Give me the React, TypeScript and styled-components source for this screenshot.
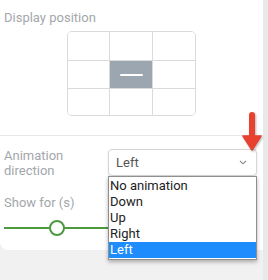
import React from 'react';
import styled, { createGlobalStyle } from 'styled-components';

const GlobalStyle = createGlobalStyle`
  html, body {
    margin: 0;
    padding: 0;
    background: #f1f1f1;
    font-family: Roboto, "Liberation Sans", sans-serif;
  }
`;

const Page = styled.div`
  display: flex;
  width: 268px;
  height: 280px;
  overflow: hidden;
`;

const Panel = styled.div`
  position: relative;
  width: 263px;
  height: 250px;
  background: #ffffff;
  border-bottom-left-radius: 8px;
  display: flex;
  flex-direction: column;
`;

const Strip = styled.div`
  flex: 1;
  background: #e9e9e9;
`;

const Section = styled.div<{ $top?: boolean }>`
  padding: ${(p) => (p.$top ? '10px 4px 0' : '13px 4px 0')};
  height: ${(p) => (p.$top ? '135px' : 'auto')};
  border-top: ${(p) => (p.$top ? 'none' : '1px solid #e7e7e7')};
  box-sizing: border-box;
`;

const Label = styled.div`
  font-size: 13px;
  line-height: 15px;
  color: #a3a7ab;
`;

const PositionGrid = styled.div`
  margin: 6px auto 0;
  width: 127px;
  display: grid;
  grid-template-columns: 42px 43px 42px;
  grid-template-rows: 29px 28px 26px;
  border: 1px solid #dadada;
  border-radius: 5px;
  overflow: hidden;
`;

const Cell = styled.div<{ $active?: boolean; $col: number; $row: number }>`
  background: ${(p) => (p.$active ? '#9ba6b1' : '#ffffff')};
  border-right: ${(p) => (p.$col < 2 ? '1px solid #dadada' : 'none')};
  border-bottom: ${(p) => (p.$row < 2 ? '1px solid #dadada' : 'none')};
  display: flex;
  align-items: center;
  justify-content: center;
`;

const Dash = styled.div`
  width: 23px;
  height: 2px;
  border-radius: 1px;
  background: #ffffff;
`;

const Row = styled.div`
  display: flex;
  align-items: flex-start;
`;

const RowLabel = styled(Label)`
  width: 104px;
  margin-top: -1px;
`;

const Select = styled.div`
  width: 149px;
  height: 27px;
  box-sizing: border-box;
  border: 1px solid #d6d6d6;
  border-radius: 4px;
  box-shadow: 0 1px 2px rgba(0, 0, 0, 0.12);
  display: flex;
  align-items: center;
  justify-content: space-between;
  padding: 0 9px 0 7px;
  font-size: 13px;
  color: #555;
`;

const ShowLabel = styled(Label)`
  margin-top: 17px;
`;

const SliderRow = styled.div`
  position: relative;
  width: 200px;
  height: 20px;
  margin-top: 8px;
  display: flex;
  align-items: center;
`;

const Track = styled.div`
  flex: 1;
  height: 2px;
  background: #4c9a3e;
`;

const Thumb = styled.div`
  position: absolute;
  left: 45px;
  top: 2px;
  width: 16px;
  height: 16px;
  box-sizing: border-box;
  border: 2px solid #4c9a3e;
  border-radius: 50%;
  background: #ffffff;
`;

const Listbox = styled.ul`
  position: absolute;
  left: 108px;
  top: 176px;
  width: 149px;
  margin: 0;
  padding: 1px 0;
  list-style: none;
  box-sizing: border-box;
  background: #ffffff;
  border: 1px solid #8f8f8f;
  box-shadow: 0 2px 4px rgba(0, 0, 0, 0.3);
  font-size: 13px;
`;

const Option = styled.li<{ $selected?: boolean }>`
  height: 16px;
  line-height: 16px;
  padding-left: 1px;
  color: ${(p) => (p.$selected ? '#ffffff' : '#222')};
  background: ${(p) => (p.$selected ? '#1e8cfd' : 'transparent')};
`;

const Arrow = styled.svg`
  position: absolute;
  left: 241px;
  top: 110px;
  filter: drop-shadow(1px 1px 1px rgba(0, 0, 0, 0.3));
`;

const options = ['No animation', 'Down', 'Up', 'Right', 'Left'];

const App = () => {
  return (
    <Page>
      <GlobalStyle />
      <Panel>
        <Section $top>
          <Label>Display position</Label>
          <PositionGrid>
            {Array.from({ length: 9 }).map((_, i) => (
              <Cell key={i} $col={i % 3} $row={Math.floor(i / 3)} $active={i === 4}>
                {i === 4 && <Dash />}
              </Cell>
            ))}
          </PositionGrid>
        </Section>
        <Section>
          <Row>
            <RowLabel>
              Animation
              <br />
              direction
            </RowLabel>
            <Select>
              <span>Left</span>
              <svg width="8" height="5" viewBox="0 0 8 5">
                <path d="M1 1l3 2.8L7 1" fill="none" stroke="#8a8a8a" strokeWidth="1.1" />
              </svg>
            </Select>
          </Row>
          <ShowLabel>Show for (s)</ShowLabel>
          <SliderRow>
            <Track />
            <Thumb />
          </SliderRow>
        </Section>
        <Listbox>
          {options.map((o) => (
            <Option key={o} $selected={o === 'Left'}>
              {o}
            </Option>
          ))}
        </Listbox>
        <Arrow width="22" height="42" viewBox="0 0 22 42">
          <rect x="8" y="2" width="6" height="28" rx="3" fill="#e8412f" />
          <path d="M2 26h18l-9 14z" fill="#e8412f" strokeLinejoin="round" stroke="#e8412f" strokeWidth="1.5" />
        </Arrow>
      </Panel>
      <Strip />
    </Page>
  );
};

export default App;
